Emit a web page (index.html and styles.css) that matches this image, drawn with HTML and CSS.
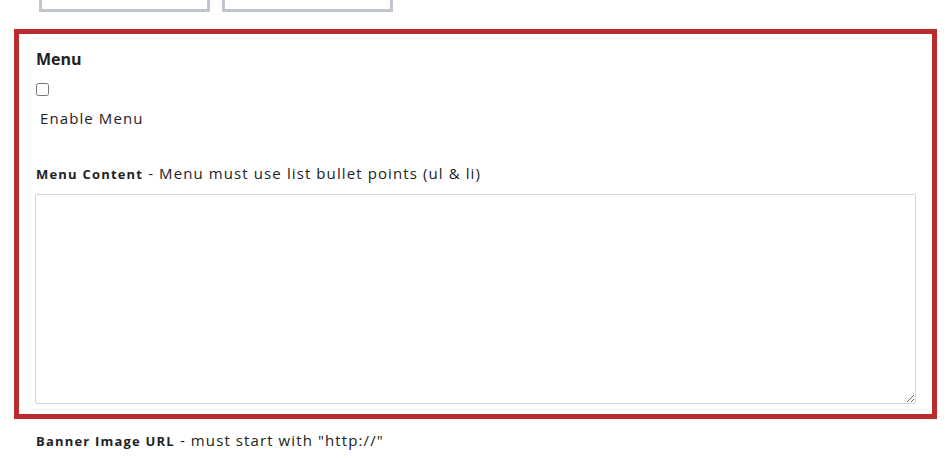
FILE: index.html
```html
<!DOCTYPE html>
<html lang="en">
<head>
    <meta charset="UTF-8">
    <title>Menu settings</title>
    <link rel="stylesheet" href="styles.css">
</head>
<body>
<div class="page">
    <div class="tabs">
        <div class="tab"></div>
        <div class="tab"></div>
    </div>
    <div class="menuBox">
        <div class="title">Menu</div>
        <input class="check" type="checkbox" id="enableMenu">
        <label class="checkLabel" for="enableMenu">Enable Menu</label>
        <div class="field">
            <span class="fieldName">Menu Content</span> - Menu must use list bullet points (ul &amp; li)
        </div>
        <textarea class="content"></textarea>
    </div>
    <div class="field banner">
        <span class="fieldName">Banner Image URL</span> - must start with "http://"
    </div>
</div>
</body>
</html>
```

FILE: styles.css
```css
body {
    margin: 0;
    background-color: white;
    color: #222;
    font-family: "Open Sans", "Liberation Sans", sans-serif;
    font-size: 15px;
}

.page {
    width: 952px;
    height: 458px;
    overflow: hidden;
}

.tabs {
    display: flex;
    gap: 12px;
    margin-left: 39px;
    margin-top: -28px;
}

.tab {
    width: 165px;
    height: 34px;
    border: 3px solid #c0c4cc;
    background-color: white;
}

.menuBox {
    margin: 17px 0 0 14px;
    width: 881px;
    padding: 16px 16px 10px 16px;
    border: 5px solid #b92b2d;
}

.title {
    font-weight: bold;
    font-size: 16px;
    line-height: 20px;
    margin-left: 1px;
    margin-top: -1px;
}

.check {
    display: block;
    width: 13px;
    height: 13px;
    margin: 14px 0 0 1px;
}

.checkLabel {
    display: block;
    margin: 12px 0 0 5px;
    line-height: 20px;
    letter-spacing: 1.1px;
}

.field {
    margin: 35px 0 0 1px;
    line-height: 20px;
    letter-spacing: 1.1px;
}

.fieldName {
    font-weight: bold;
    font-size: 13px;
    letter-spacing: 1.2px;
}

.content {
    display: block;
    box-sizing: border-box;
    width: 881px;
    height: 210px;
    margin-top: 10px;
    border: 1px solid #d4d4d4;
    border-radius: 2px;
    resize: vertical;
}

.banner {
    margin: 11px 0 0 36px;
}
```
